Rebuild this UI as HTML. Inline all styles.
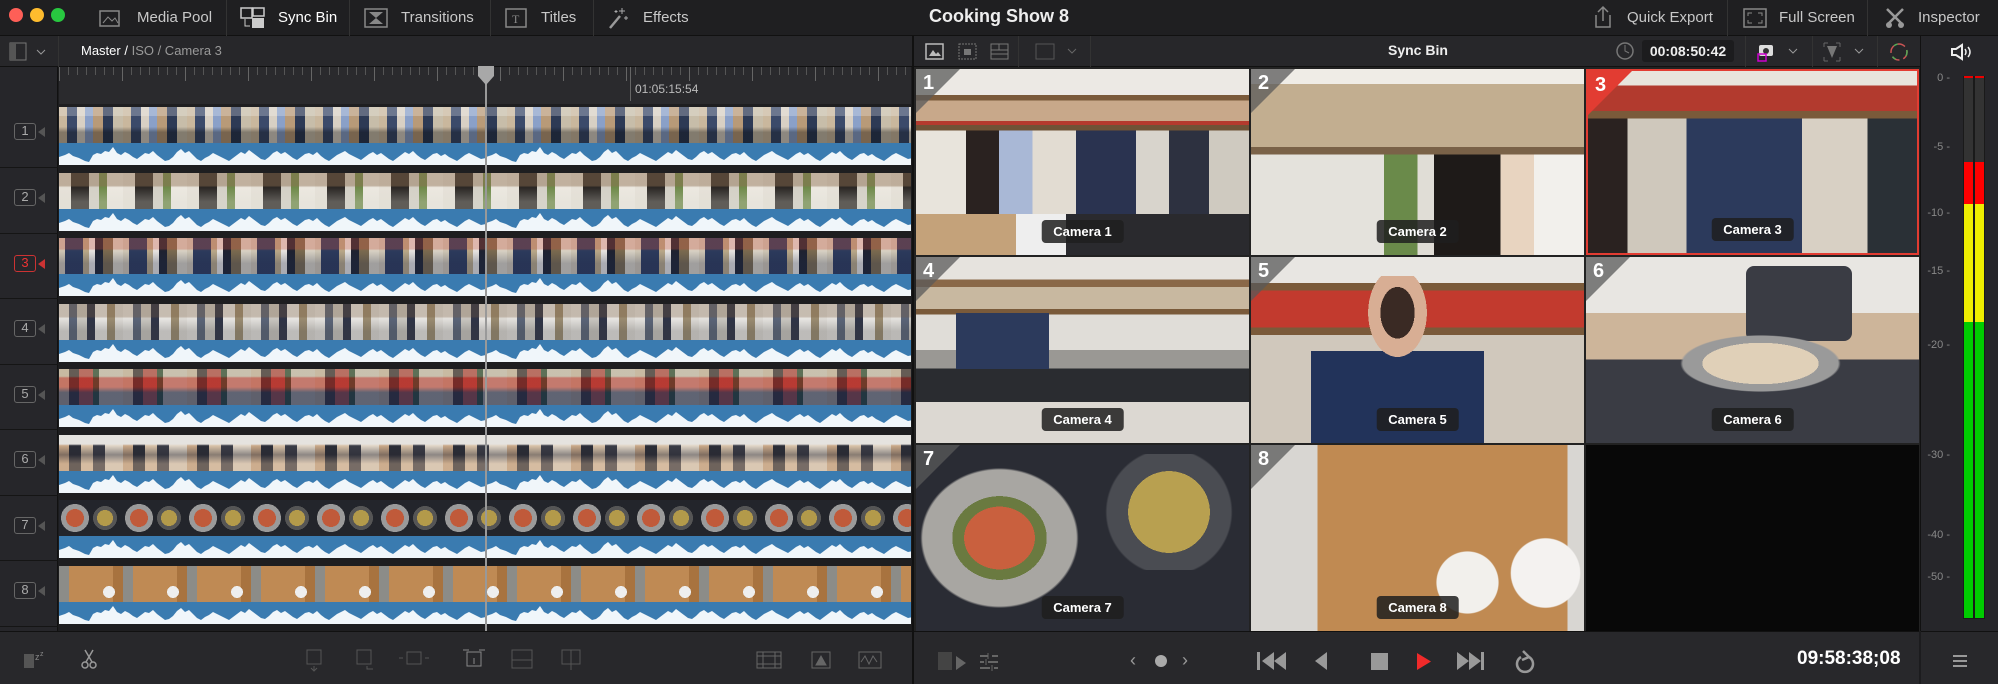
<!DOCTYPE html>
<html><head><meta charset="utf-8"><style>
*{margin:0;padding:0;box-sizing:border-box}
body{width:1998px;height:684px;background:#1c1c1e;font-family:"Liberation Sans",sans-serif;color:#ddd;position:relative;overflow:hidden}
.a{position:absolute}
.top{left:0;top:0;width:1998px;height:36px;background:#1f1f21;border-bottom:1px solid #111}
.tb{font-size:15px;color:#c8c8c8;top:9px}
.sep{width:1px;height:36px;top:0;background:#333}
.dot{width:14px;height:14px;border-radius:50%;top:8px}
.bar2{top:36px;height:31px;background:#27272a;border-bottom:1px solid #111}
.ruler{left:59px;top:67px;width:852px;height:37px;background:#2a2a2d;background-image:repeating-linear-gradient(90deg,#555 0 1px,transparent 1px 9px);background-size:9px 8px;background-repeat:repeat-x;background-position:0 0}
.hdr{left:0;top:67px;width:58px;height:564px;background:#26262a;border-right:1px solid #111}
.track{left:59px;width:852px;height:64px}
.vid{position:absolute;left:0;top:3px;width:852px;height:36px}
.aud{position:absolute;left:0;top:39px;width:852px;height:22px}
.lbl{left:14px;width:22px;height:17px;border:1.5px solid #666;border-radius:3px;font-size:13px;color:#aaa;text-align:center;line-height:14px}
.cam{width:0;height:0;border-top:5px solid transparent;border-bottom:5px solid transparent;border-right:7px solid #555}
.cell{width:333px;height:186px;overflow:hidden}
.num{position:absolute;left:0;top:0;width:0;height:0;border-top:44px solid rgba(90,90,90,.75);border-right:44px solid transparent}
.nt{position:absolute;left:7px;top:3px;font-size:20px;font-weight:bold;color:#fff}
.cl{position:absolute;bottom:12px;left:50%;transform:translateX(-50%);background:rgba(30,30,30,.85);color:#fff;font-size:13px;font-weight:bold;padding:4px 12px;border-radius:4px;white-space:nowrap}
.ml{font-size:11px;color:#888;text-align:right;width:30px;left:1920px}
.bot{top:631px;height:53px;background:#28282b;border-top:1px solid #111}
</style></head><body>
<div class="a top"></div>
<div class="a dot" style="left:9px;background:#fe5f57"></div>
<div class="a dot" style="left:30px;background:#febc2e"></div>
<div class="a dot" style="left:51px;background:#28c840"></div>
<svg class="a" style="left:99px;top:8px" width="22" height="20"><rect x="1" y="3" width="19" height="15" fill="none" stroke="#888" stroke-width="1.5"/><path d="M4 15l5-6 4 4 3-3 3 5" fill="none" stroke="#888"/></svg>
<div class="a tb" style="left:137px">Media Pool</div>
<div class="a sep" style="left:226px"></div>
<svg class="a" style="left:240px;top:7px" width="26" height="22"><rect x="1" y="1" width="11" height="10" fill="none" stroke="#ccc" stroke-width="1.5"/><rect x="13" y="1" width="11" height="8" fill="none" stroke="#ccc" stroke-width="1.5"/><rect x="12" y="11" width="12" height="10" fill="#ccc"/><path d="M5 12v7h5" fill="none" stroke="#ccc"/></svg>
<div class="a tb" style="left:278px;color:#fff">Sync Bin</div>
<div class="a sep" style="left:349px"></div>
<svg class="a" style="left:364px;top:8px" width="24" height="20"><rect x="1" y="1" width="22" height="18" fill="none" stroke="#888" stroke-width="1.5"/><path d="M5 4h14l-7 6zM5 16h14l-7-6z" fill="#888"/></svg>
<div class="a tb" style="left:401px">Transitions</div>
<div class="a sep" style="left:490px"></div>
<svg class="a" style="left:505px;top:8px" width="22" height="20"><rect x="1" y="1" width="20" height="18" fill="none" stroke="#888" stroke-width="1.5"/><text x="7" y="15" font-size="12" fill="#888" font-family="Liberation Serif">T</text></svg>
<div class="a tb" style="left:541px">Titles</div>
<div class="a sep" style="left:593px"></div>
<svg class="a" style="left:607px;top:6px" width="22" height="24"><path d="M3 22L13 10" stroke="#999" stroke-width="2.5"/><path d="M15 2v6M12 5h6M19 10v4M17 12h4M9 4v3M7.5 5.5h3" stroke="#aaa"/></svg>
<div class="a tb" style="left:643px">Effects</div>
<div class="a" style="left:0;width:1998px;top:6px;text-align:center;font-size:18px;font-weight:bold;color:#eee">Cooking Show 8</div>
<svg class="a" style="left:1592px;top:5px" width="22" height="24"><path d="M4 10v12h14V10M11 16V2M6 7l5-5 5 5" fill="none" stroke="#888" stroke-width="1.5"/></svg>
<div class="a tb" style="left:1627px">Quick Export</div>
<div class="a sep" style="left:1727px"></div>
<svg class="a" style="left:1743px;top:8px" width="24" height="20"><rect x="1" y="1" width="22" height="18" fill="none" stroke="#888" stroke-width="1.5"/><path d="M5 8V5h4M15 5h4v3M19 12v3h-4M9 15H5v-3" fill="none" stroke="#888"/></svg>
<div class="a tb" style="left:1779px">Full Screen</div>
<div class="a sep" style="left:1867px"></div>
<svg class="a" style="left:1884px;top:6px" width="22" height="24"><path d="M3 3l16 16M19 3L3 19" stroke="#999" stroke-width="2.5"/><circle cx="5" cy="19" r="3" fill="#999"/><circle cx="17" cy="19" r="3" fill="#999"/></svg>
<div class="a tb" style="left:1918px">Inspector</div>

<div class="a bar2" style="left:0;width:912px"></div>
<div class="a bar2" style="left:914px;width:1084px"></div>
<svg class="a" style="left:9px;top:42px" width="40" height="20"><rect x="1" y="1" width="16" height="17" fill="none" stroke="#777"/><rect x="1" y="1" width="6" height="17" fill="#555"/><path d="M28 8l4 4 4-4" fill="none" stroke="#999"/></svg>
<div class="a sep" style="left:58px;top:36px;height:31px"></div>
<div class="a" style="left:81px;top:43px;font-size:13px;color:#fff">Master / <span style="color:#999">ISO / Camera 3</span></div>
<svg class="a" style="left:925px;top:42px" width="120" height="20"><rect x="1" y="2" width="17" height="15" fill="none" stroke="#bbb" stroke-width="1.5"/><path d="M4 14l4-6 3 4 2-2 3 4z" fill="#bbb"/><rect x="34" y="2" width="17" height="15" fill="none" stroke="#777" stroke-dasharray="2 1"/><rect x="39" y="7" width="7" height="6" fill="#777"/><rect x="66" y="2" width="17" height="15" fill="none" stroke="#777"/><path d="M66 8h17M66 12h17M74 2v6" stroke="#777"/></svg>
<div class="a sep" style="left:1018px;top:36px;height:31px"></div>
<svg class="a" style="left:1035px;top:43px" width="48" height="18"><rect x="1" y="1" width="18" height="15" fill="none" stroke="#555"/><path d="M33 6l4 4 4-4" fill="none" stroke="#666"/></svg>
<div class="a sep" style="left:1090px;top:36px;height:31px"></div>
<div class="a" style="left:1388px;top:42px;font-size:14px;font-weight:bold;color:#eee">Sync Bin</div>
<svg class="a" style="left:1615px;top:40px" width="20" height="22"><circle cx="10" cy="11" r="8" fill="none" stroke="#777" stroke-width="1.5"/><path d="M10 5v6l4 2" stroke="#777" fill="none"/></svg>
<div class="a" style="left:1642px;top:40px;width:92px;height:22px;background:#1c1c1e;border-radius:3px;font-size:14px;font-weight:bold;color:#eee;text-align:center;line-height:22px">00:08:50:42</div>
<div class="a sep" style="left:1745px;top:36px;height:31px"></div>
<svg class="a" style="left:1756px;top:41px" width="50" height="22"><rect x="3" y="4" width="14" height="11" rx="2" fill="#ddd"/><circle cx="10" cy="10" r="3" fill="#333"/><rect x="2" y="13" width="8" height="7" fill="none" stroke="#c0c" stroke-width="1.5"/><path d="M33 8l4 4 4-4" fill="none" stroke="#999"/></svg>
<div class="a sep" style="left:1812px;top:36px;height:31px"></div>
<svg class="a" style="left:1822px;top:41px" width="50" height="22"><path d="M5 5l5 12 5-12" fill="#777"/><path d="M2 2h4M2 2v4M18 2h-4M18 2v4M2 20h4M2 20v-4M18 20h-4M18 20v-4" stroke="#666"/><path d="M33 8l4 4 4-4" fill="none" stroke="#999"/></svg>
<div class="a sep" style="left:1877px;top:36px;height:31px"></div>
<svg class="a" style="left:1888px;top:41px" width="22" height="22"><circle cx="11" cy="11" r="8" fill="none" stroke="#c55" stroke-width="1.5" stroke-dasharray="8 4"/><circle cx="11" cy="11" r="8" fill="none" stroke="#5a5" stroke-width="1.5" stroke-dasharray="4 12"/></svg>
<div class="a" style="left:1920px;top:36px;width:78px;height:595px;background:#26262a;border-left:1px solid #111"></div>
<svg class="a" style="left:1950px;top:43px" width="22" height="18"><path d="M2 6h4l6-4v14l-6-4H2z" fill="none" stroke="#eee" stroke-width="2"/><path d="M15 6q2 3 0 6M18 4q4 5 0 10" fill="none" stroke="#eee" stroke-width="1.5"/></svg>

<div class="a hdr"></div>
<div class="a ruler"></div>
<div class="a" style="left:59px;top:67px;width:852px;height:37px;background-image:repeating-linear-gradient(90deg,#666 0 1px,transparent 1px 63px);background-size:852px 14px;background-repeat:no-repeat"></div>
<div class="a" style="left:630px;top:67px;width:1px;height:34px;background:#666"></div>
<div class="a" style="left:635px;top:82px;font-size:12px;color:#bbb">01:05:15:54</div>
<svg class="a" style="left:0;top:0" width="0" height="0"><defs><pattern id="wf" width="427" height="22" patternUnits="userSpaceOnUse"><rect width="427" height="22" fill="#3a7bb0"/><polygon fill="#f0f6fa" points="0,22 0,14 6,12 10,10 14,13 20,15 26,18 30,19 34,12 38,10 42,11 46,8 50,9 54,4 58,10 62,12 66,9 70,11 74,14 78,16 82,13 86,10 90,11 94,8 98,12 102,15 106,18 110,17 114,14 118,9 122,6 126,10 130,8 134,12 138,16 142,18 146,15 150,13 154,10 158,12 162,14 166,16 170,18 174,15 178,12 182,9 186,11 190,7 194,10 198,13 202,16 206,17 210,14 214,10 218,8 222,11 226,9 230,12 234,15 238,17 242,14 246,11 250,10 254,12 258,9 262,13 266,16 270,18 274,15 278,12 282,10 286,8 290,11 294,13 298,15 302,17 306,14 310,11 314,9 318,12 322,10 326,13 330,16 334,18 338,15 342,12 346,9 350,11 354,8 358,12 362,15 366,17 370,14 374,11 378,10 382,13 386,11 390,14 394,16 398,18 402,15 406,12 410,10 414,12 418,14 422,16 427,15 427,22"/></pattern></defs></svg>

<div class="a" style="left:59px;top:104px;width:852px;height:527px;background:#1e1e20"></div>
<div class="a track" style="top:104px"><div class="vid" style="background:linear-gradient(180deg,rgba(255,255,255,.25) 0 25%,transparent 25% 55%,rgba(0,0,0,.35) 70%),repeating-linear-gradient(90deg,#c9b79d 0 8px,#3b4a6a 8px 18px,#d8d0c4 18px 26px,#8aa0c8 26px 34px,#b89a78 34px 44px,#2d3a55 44px 54px,#c7bda9 54px 64px)"></div><svg class="aud" width="852" height="22"><rect width="852" height="22" fill="url(#wf)"/></svg></div>
<div class="a track" style="top:169.5px"><div class="vid" style="background:linear-gradient(180deg,rgba(140,110,80,.45) 0 35%,transparent 40%,rgba(220,220,210,.3) 80%),repeating-linear-gradient(90deg,#e6e1d8 0 12px,#2a2624 12px 30px,#d4d0c6 30px 40px,#6f8a4a 40px 48px,#ece8e0 48px 64px)"></div><svg class="aud" width="852" height="22"><rect width="852" height="22" fill="url(#wf)"/></svg></div>
<div class="a track" style="top:235px"><div class="vid" style="background:linear-gradient(180deg,rgba(200,80,60,.3) 0 30%,transparent 35%,rgba(30,40,70,.3) 70%),repeating-linear-gradient(90deg,#cfc6b4 0 6px,#2c3a5c 6px 24px,#b9a888 24px 30px,#e7e4e0 30px 36px,#1e2230 36px 44px,#7a6a4e 44px 54px,#d9d2c4 54px 64px)"></div><svg class="aud" width="852" height="22"><rect width="852" height="22" fill="url(#wf)"/></svg></div>
<div class="a track" style="top:300.5px"><div class="vid" style="background:linear-gradient(180deg,rgba(120,90,60,.3) 0 35%,transparent 40%,rgba(60,60,60,.25) 75%),repeating-linear-gradient(90deg,#e4e2de 0 10px,#5a6478 10px 18px,#c9c6c0 18px 28px,#2e3346 28px 36px,#e8e6e3 36px 48px,#9a8b70 48px 56px,#dddad5 56px 64px)"></div><svg class="aud" width="852" height="22"><rect width="852" height="22" fill="url(#wf)"/></svg></div>
<div class="a track" style="top:366px"><div class="vid" style="background:linear-gradient(180deg,rgba(200,200,190,.3) 0 20%,rgba(190,40,40,.45) 25% 50%,rgba(25,40,80,.6) 65%),repeating-linear-gradient(90deg,#c8b496 0 10px,#3a2e28 10px 20px,#b24a3c 20px 34px,#2f4a2a 34px 40px,#c9bea8 40px 64px)"></div><svg class="aud" width="852" height="22"><rect width="852" height="22" fill="url(#wf)"/></svg></div>
<div class="a track" style="top:431.5px"><div class="vid" style="background:linear-gradient(180deg,#e5e3df 0 25%,transparent 30%,rgba(40,40,50,.45) 55%,rgba(210,180,150,.4) 80%),repeating-linear-gradient(90deg,#c9a888 0 10px,#2b2d36 10px 22px,#d8c2a8 22px 34px,#3a3c46 34px 46px,#e0d5c6 46px 64px)"></div><svg class="aud" width="852" height="22"><rect width="852" height="22" fill="url(#wf)"/></svg></div>
<div class="a track" style="top:497px"><div class="vid" style="background:radial-gradient(circle at 16px 18px,#c05a3a 0 9px,#9a9a9a 9px 14px,transparent 14px) 0 0/64px 36px,radial-gradient(circle at 46px 18px,#b39a4a 0 8px,#555 8px 12px,transparent 12px) 0 0/64px 36px,#23252b"></div><svg class="aud" width="852" height="22"><rect width="852" height="22" fill="url(#wf)"/></svg></div>
<div class="a track" style="top:562.5px"><div class="vid" style="background:radial-gradient(circle at 50px 26px,#eee 0 6px,transparent 6px) 0 0/64px 36px,repeating-linear-gradient(90deg,#8c8c88 0 10px,#bf8a54 10px 54px,#a8733f 54px 64px)"></div><svg class="aud" width="852" height="22"><rect width="852" height="22" fill="url(#wf)"/></svg></div>
<div class="a" style="left:485px;top:67px;width:2px;height:564px;background:#999"></div>
<svg class="a" style="left:477px;top:66px" width="18" height="20"><path d="M1 0h16v10l-8 9-8-9z" fill="#a8a8a8"/></svg>

<div class="a lbl" style="top:123px">1</div><div class="a cam" style="left:38px;top:127px"></div>
<div class="a lbl" style="top:189px">2</div><div class="a cam" style="left:38px;top:193px"></div>
<div class="a lbl" style="top:255px;border-color:#c33;color:#e33">3</div><div class="a cam" style="left:38px;top:259px;border-right-color:#c33"></div>
<div class="a lbl" style="top:320px">4</div><div class="a cam" style="left:38px;top:324px"></div>
<div class="a lbl" style="top:386px">5</div><div class="a cam" style="left:38px;top:390px"></div>
<div class="a lbl" style="top:451px">6</div><div class="a cam" style="left:38px;top:455px"></div>
<div class="a lbl" style="top:517px">7</div><div class="a cam" style="left:38px;top:521px"></div>
<div class="a lbl" style="top:582px">8</div><div class="a cam" style="left:38px;top:586px"></div>
<div class="a" style="left:0;top:167px;width:58px;height:1px;background:#151515"></div>
<div class="a" style="left:0;top:233px;width:58px;height:1px;background:#151515"></div>
<div class="a" style="left:0;top:298px;width:58px;height:1px;background:#151515"></div>
<div class="a" style="left:0;top:364px;width:58px;height:1px;background:#151515"></div>
<div class="a" style="left:0;top:429px;width:58px;height:1px;background:#151515"></div>
<div class="a" style="left:0;top:495px;width:58px;height:1px;background:#151515"></div>
<div class="a" style="left:0;top:560px;width:58px;height:1px;background:#151515"></div>
<div class="a" style="left:0;top:626px;width:58px;height:1px;background:#151515"></div>

<div class="a" style="left:912px;top:36px;width:2px;height:648px;background:#111"></div>
<div class="a" style="left:914px;top:67px;width:1006px;height:564px;background:#222"></div>
<div class="a cell" style="left:916px;top:69px;background:linear-gradient(180deg,#ece9e4 0 14%,#7a5a3a 14% 17%,#c8a88a 17% 28%,#b33a2e 28% 30%,#6e5236 30% 33%,transparent 33%),linear-gradient(90deg,#e8e4dc 0 15%,#2a2220 15% 25%,#a9b8d6 25% 35%,#e2dcd2 35% 48%,#2a3350 48% 66%,#d8d4cc 66% 76%,#2d3140 76% 88%,#cfcac0 88%)"><div style="position:absolute;left:0;bottom:0;width:100%;height:22%;background:linear-gradient(90deg,#c4a27a 0 30%,#eee 30% 45%,#2a2a2e 45%)"></div><div class="num"></div><div class="nt">1</div><div class="cl">Camera 1</div></div>
<div class="a cell" style="left:1251px;top:69px;background:linear-gradient(180deg,#efece6 0 8%,#c2ae90 8% 42%,#7a6248 42% 46%,transparent 46%),linear-gradient(90deg,#e4e2dc 0 40%,#6a8a4a 40% 50%,#e0ddd6 50% 55%,#1e1a18 55% 75%,#e8d4c0 75% 85%,#f2f0ec 85%)"><div class="num"></div><div class="nt">2</div><div class="cl">Camera 2</div></div>
<div class="a cell" style="left:1586px;top:69px;background:linear-gradient(180deg,#e8e4dc 0 8%,#b23a2e 8% 22%,#7a5a3a 22% 26%,transparent 26%),linear-gradient(90deg,#2a2220 0 12%,#cfc8bc 12% 30%,#2c3a5c 30% 65%,#d8d0c4 65% 85%,#2a3036 85%);border:2px solid #e23c32"><div class="num" style="border-top-color:#e23c32"></div><div class="nt">3</div><div class="cl">Camera 3</div></div>
<div class="a cell" style="left:916px;top:257px;background:linear-gradient(180deg,#e6e3de 0 12%,#8a6848 12% 16%,#c8b8a0 16% 28%,#7a5a3a 28% 31%,#e0ddd8 31% 50%,#9a9894 50% 60%,#2a2c30 60% 78%,#dcd8d2 78%)"><div style="position:absolute;left:12%;top:30%;width:28%;height:30%;background:#2c3a5c"></div><div class="num"></div><div class="nt">4</div><div class="cl">Camera 4</div></div>
<div class="a cell" style="left:1251px;top:257px;background:linear-gradient(180deg,#e8e6e2 0 14%,#7a5a3a 14% 18%,#c23a2e 18% 38%,#7a5a3a 38% 42%,#d0c8bc 42%)"><div style="position:absolute;left:18%;top:10%;width:52%;height:90%;background:radial-gradient(ellipse at 50% 22%,#3a2a24 0 14%,#d8ae94 14% 24%,transparent 24%),linear-gradient(180deg,transparent 45%,#22335a 45%)"></div><div class="num"></div><div class="nt">5</div><div class="cl">Camera 5</div></div>
<div class="a cell" style="left:1586px;top:257px;background:linear-gradient(180deg,#e8e6e2 0 30%,#cdb59a 30% 55%,#3a3c44 55% 100%)"><div style="position:absolute;left:48%;top:5%;width:32%;height:40%;background:#3a3c44;border-radius:8px"></div><div style="position:absolute;left:25%;top:40%;width:55%;height:35%;background:radial-gradient(ellipse,#e0d0b8 0 45%,#9a9a9a 45% 60%,transparent 62%)"></div><div class="num"></div><div class="nt">6</div><div class="cl">Camera 6</div></div>
<div class="a cell" style="left:916px;top:445px;background:#2a2c34"><div style="position:absolute;left:0;top:10%;width:50%;height:80%;background:radial-gradient(ellipse,#c9603e 0 30%,#6a7a40 30% 40%,#a8a6a2 40% 65%,transparent 67%)"></div><div style="position:absolute;left:55%;top:5%;width:42%;height:62%;background:radial-gradient(circle,#b8a050 0 45%,#4a4c52 45% 68%,transparent 70%)"></div><div class="num"></div><div class="nt">7</div><div class="cl">Camera 7</div></div>
<div class="a cell" style="left:1251px;top:445px;background:linear-gradient(90deg,#d8d6d2 0 20%,#c08a52 20% 95%,#d8d6d2 95%)"><div style="position:absolute;left:54%;top:55%;width:22%;height:38%;background:radial-gradient(circle,#f2f0ec 0 60%,transparent 62%)"></div><div style="position:absolute;left:76%;top:48%;width:25%;height:42%;background:radial-gradient(circle,#f4f2f0 0 60%,transparent 62%)"></div><div class="num"></div><div class="nt">8</div><div class="cl">Camera 8</div></div>
<div class="a cell" style="left:1586px;top:445px;background:#080808"></div>

<div class="a ml" style="top:72px">0 -</div>
<div class="a ml" style="top:141px">-5 -</div>
<div class="a ml" style="top:207px">-10 -</div>
<div class="a ml" style="top:265px">-15 -</div>
<div class="a ml" style="top:339px">-20 -</div>
<div class="a ml" style="top:449px">-30 -</div>
<div class="a ml" style="top:529px">-40 -</div>
<div class="a ml" style="top:571px">-50 -</div>
<div class="a" style="left:1963px;top:76px;width:22px;height:543px;background:#1a1a1a"></div>
<div class="a" style="left:1964px;top:76px;width:9px;height:542px;background:linear-gradient(180deg,#e00 0 2px,#333 2px 86px,#f00 86px 128px,#ee0 128px 246px,#0c0 246px)"></div>
<div class="a" style="left:1975px;top:76px;width:9px;height:542px;background:linear-gradient(180deg,#e00 0 2px,#333 2px 86px,#f00 86px 128px,#ee0 128px 246px,#0c0 246px)"></div>

<div class="a bot" style="left:0;width:912px"></div>
<div class="a bot" style="left:914px;width:1005px"></div>
<div class="a bot" style="left:1921px;width:77px"></div>
<svg class="a" style="left:22px;top:648px" width="36" height="24"><rect x="2" y="6" width="10" height="14" fill="#555"/><text x="13" y="12" font-size="9" fill="#888">z</text><text x="18" y="8" font-size="7" fill="#888">z</text></svg>
<svg class="a" style="left:80px;top:648px" width="18" height="22"><circle cx="5" cy="17" r="3" fill="none" stroke="#999" stroke-width="1.5"/><circle cx="13" cy="17" r="3" fill="none" stroke="#999" stroke-width="1.5"/><path d="M6 14L13 2M12 14L5 2" stroke="#999" stroke-width="1.5"/></svg>
<svg class="a" style="left:305px;top:648px" width="290" height="24" fill="none" stroke="#555"><rect x="2" y="2" width="14" height="14"/><path d="M9 18v4M6 20l3 3 3-3"/><rect x="52" y="2" width="14" height="14"/><path d="M62 18v3h6"/><rect x="102" y="4" width="14" height="12"/><path d="M98 10l-4 0M120 10h4"/><rect x="162" y="4" width="14" height="14" stroke="#888"/><path d="M158 2h6M174 2h6M169 10v6" stroke="#888"/><rect x="207" y="2" width="20" height="18"/><path d="M207 12h20"/><rect x="257" y="2" width="18" height="14"/><path d="M266 2v20"/></svg>
<svg class="a" style="left:755px;top:650px" width="140" height="22" fill="none" stroke="#666"><rect x="2" y="2" width="24" height="16"/><path d="M2 6h24M2 14h24M8 2v16M20 2v16"/><rect x="57" y="2" width="18" height="16"/><path d="M61 15l5-9 5 9z" fill="#666"/><rect x="104" y="2" width="22" height="16"/><path d="M106 12l4-6 4 8 4-8 4 6"/></svg>
<svg class="a" style="left:936px;top:650px" width="70" height="24"><rect x="2" y="2" width="14" height="18" fill="#444"/><path d="M20 6l10 7-10 7z" fill="#666"/><path d="M44 6h8M56 6h6M44 12h4M52 12h10M44 18h10M58 18h4" stroke="#666" stroke-width="2"/><path d="M52 3v6M50 9v6M56 15v6" stroke="#666"/></svg>
<div class="a" style="left:1130px;top:650px;font-size:18px;color:#999">‹</div>
<div class="a" style="left:1155px;top:655px;width:12px;height:12px;border-radius:50%;background:#aaa"></div>
<div class="a" style="left:1182px;top:650px;font-size:18px;color:#999">›</div>
<svg class="a" style="left:1255px;top:649px" width="290" height="26"><path d="M2 3h3v18H2z M19 3v18l-12-9z M31 3v18l-12-9z" fill="#999"/><path d="M72 3v18l-12-9z" fill="#999"/><rect x="116" y="4" width="17" height="17" fill="#999"/><path d="M162 4l14 8.5-14 8.5z" fill="#f02a2a"/><path d="M202 3v18l12-9z M214 3v18l12-9z M226 3h3v18h-3z" fill="#999"/><path d="M266 8a8 8 0 1 0 8 0" fill="none" stroke="#999" stroke-width="2.5"/><path d="M268 2l6 6-7 3" fill="none" stroke="#999" stroke-width="2.5"/></svg>
<div class="a" style="left:1797px;top:648px;font-size:19px;font-weight:bold;color:#fff">09:58:38;08</div>
<svg class="a" style="left:1952px;top:653px" width="16" height="16"><path d="M1 3h14M1 8h14M1 13h14" stroke="#999" stroke-width="2"/></svg>
</body></html>
